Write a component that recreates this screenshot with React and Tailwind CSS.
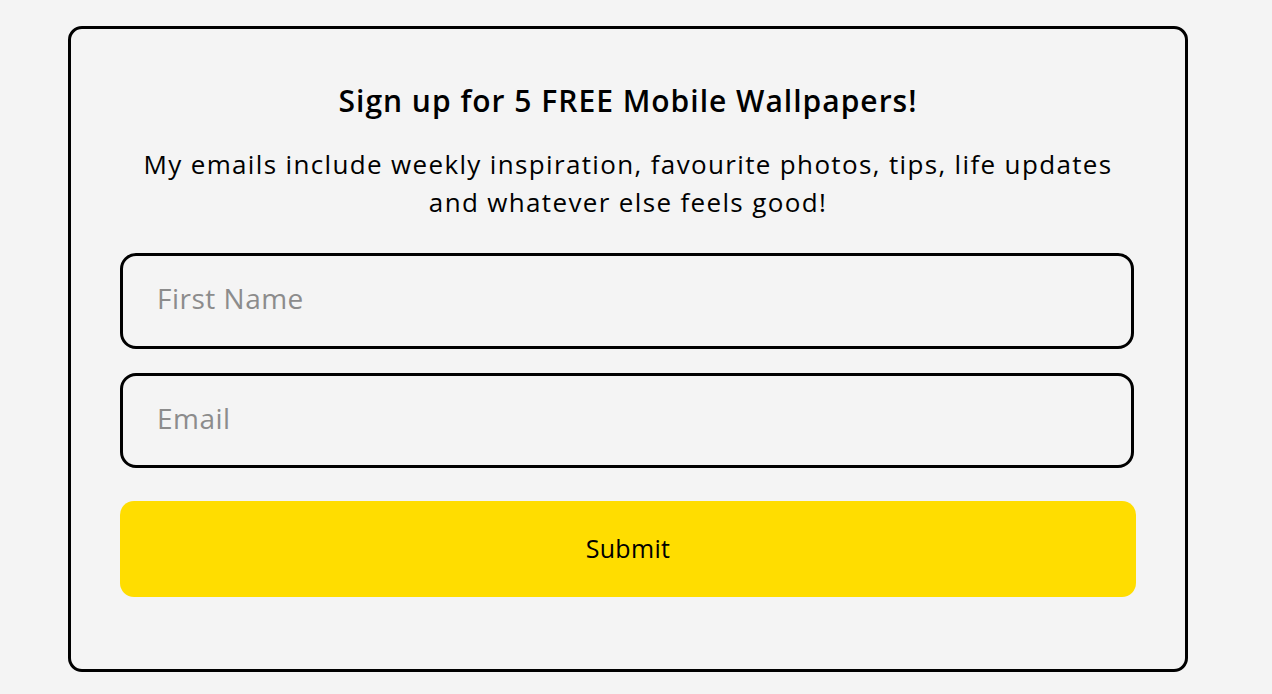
export default function App() {
  return (
    <div className="min-h-screen bg-[#f4f4f4] pt-[26px] pl-[68px] font-['Open_Sans','Lato',sans-serif] text-black">
      <form
        className="w-[1120px] h-[646px] rounded-[14px] border-[3px] border-black px-[49px] pt-[52px]"
        onSubmit={(e) => e.preventDefault()}
      >
        <h2 className="text-center text-[30px] leading-[40px] font-semibold tracking-[1px]">
          Sign up for 5 FREE Mobile Wallpapers!
        </h2>
        <p className="mt-[24px] text-center text-[26px] leading-[38px] tracking-[1.35px]">
          My emails include weekly inspiration, favourite photos, tips, life updates
          <br />
          and whatever else feels good!
        </p>

        <div className="mt-[32px] flex flex-col gap-[24px]">
          <input
            type="text"
            placeholder="First Name"
            className="h-[96px] w-[1014px] rounded-[16px] border-[3px] border-black bg-transparent px-[34px] pb-[6px] text-[28px] tracking-[0.5px] placeholder:text-[#8c8c8c] outline-none"
          />
          <input
            type="email"
            placeholder="Email"
            className="h-[95px] w-[1014px] rounded-[16px] border-[3px] border-black bg-transparent px-[34px] pb-[6px] text-[28px] tracking-[0.5px] placeholder:text-[#8c8c8c] outline-none"
          />
        </div>

        <button
          type="submit"
          className="mt-[33px] h-[96px] w-[1016px] rounded-[14px] bg-[#ffdd00] text-[25px] tracking-[0.3px]"
        >
          Submit
        </button>
      </form>
    </div>
  );
}
